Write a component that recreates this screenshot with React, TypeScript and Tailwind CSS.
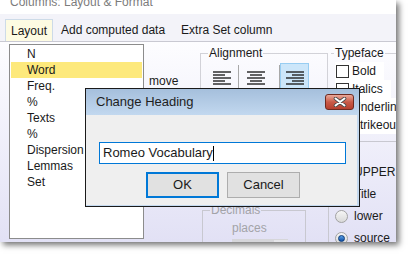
import React from "react";

const items = ["N", "Word", "Freq.", "%", "Texts", "%", "Dispersion", "Lemmas", "Set"];

function AlignIcon({ kind }: { kind: "left" | "center" | "right" }) {
  const shortX = kind === "left" ? 0 : kind === "center" ? 3 : 6;
  return (
    <svg width="18" height="14" viewBox="0 0 18 14">
      {[0, 1, 2, 3, 4].map((i) => {
        const long = i % 2 === 0;
        const x1 = long ? 0 : shortX;
        const x2 = long ? 18 : shortX + 12;
        const y = 1 + i * 3;
        return <line key={i} x1={x1} x2={x2} y1={y} y2={y} stroke="#222" strokeWidth="1.4" />;
      })}
    </svg>
  );
}

function Radio({ on }: { on?: boolean }) {
  return (
    <span className="w-[13px] h-[13px] rounded-full border border-[#a2a2a2] bg-linear-to-b from-[#f6f6f6] to-[#d9d9d9] flex items-center justify-center">
      {on && <span className="w-[7px] h-[7px] rounded-full bg-linear-to-b from-[#5aa0e6] to-[#0d4fa6] border border-[#0a3a7a]" />}
    </span>
  );
}

function Check({ label }: { label: string }) {
  return (
    <div className="h-[18px] flex items-center bg-white pl-[1px] pr-[8px] w-fit whitespace-nowrap">
      <span className="w-[13px] h-[13px] border border-[#333] bg-white" />
      <span className="ml-[3px]">{label}</span>
    </div>
  );
}

export default function App() {
  return (
    <div className="w-[411px] h-[257px] bg-white relative overflow-hidden font-['Liberation_Sans',Arial,sans-serif] text-[12px] text-[#1a1a1a]">
      <div className="w-[396px] h-[242px] flex flex-col bg-[#f3f3f9] shadow-[3px_3px_6px_rgba(0,0,0,0.55)] overflow-hidden">
        <div className="h-[14px] shrink-0 bg-white pl-[10px] text-[#7c7c7c]">
          <div className="leading-[12px] -mt-[4px]">Columns: Layout &amp; Format</div>
        </div>

        <div className="h-[27px] shrink-0 flex items-end pl-[5px]">
          <div className="h-[22px] w-[48px] flex items-center justify-center bg-[#fdfbe2] border border-b-0 border-[#cddbe8]">
            Layout
          </div>
          <div className="h-[22px] px-[8px] flex items-center">Add computed data</div>
          <div className="h-[22px] px-[8px] flex items-center">Extra Set column</div>
        </div>

        <div className="flex-1 flex items-start border-t border-[#c9c9d2] bg-linear-to-b from-[#fdfdff] to-[#e2e1f5] overflow-hidden">
          <div className="ml-[9px] mt-[2px] w-[135px] h-[195px] shrink-0 border border-[#8c8c8c] bg-white pt-[1px] px-[1px]">
            {items.map((t, i) => (
              <div key={i} className={`h-[16px] leading-[16px] pl-[16px] ${i === 1 ? "bg-[#fde97c]" : ""}`}>
                {t}
              </div>
            ))}
          </div>

          <div className="ml-[5px] mt-[31px] w-[51px] shrink-0 leading-[16px]">move</div>

          <div className="w-[128px] shrink-0 flex flex-col">
            <fieldset className="mt-[3px] h-[125px] border border-[#d2d2d8]">
              <legend className="ml-[7px] px-[1px] leading-[16px]">Alignment</legend>
              <div className="flex items-start mt-[2px] pl-[6px]">
                <div className="w-[30px] h-[30px] flex items-center justify-center">
                  <AlignIcon kind="left" />
                </div>
                <div className="ml-[1px] mt-[2px] w-[1px] h-[28px] bg-[#a8a8a8]" />
                <div className="w-[40px] h-[30px] flex items-center pl-[8px]">
                  <AlignIcon kind="center" />
                </div>
                <div className="mt-[2px] w-[1px] h-[28px] bg-[#a8a8a8]" />
                <div className="w-[29px] h-[30px] flex items-center justify-center bg-[#cce6fa] border border-[#98cdf2]">
                  <AlignIcon kind="right" />
                </div>
              </div>
            </fieldset>
            <fieldset className="mt-[32px] ml-[2px] w-[104px] h-[60px] border border-[#c8c8d0] text-[#a3a3a8]">
              <legend className="ml-[7px] px-[1px] leading-[16px]">Decimals</legend>
              <div className="pl-[29px] leading-[16px] mt-[2px]">places</div>
              <div className="ml-[29px] mt-[3px] w-[56px] h-[14px] bg-[#d6d6da] flex justify-end">
                <div className="w-[14px] h-[12px] mt-[1px] bg-[#e6e6ea]" />
              </div>
            </fieldset>
          </div>

          <div className="flex-1 flex flex-col">
            <fieldset className="mt-[3px] ml-[3px] h-[96px] border-t border-[#d2d2d8]">
              <legend className="ml-[3px] px-[1px] leading-[16px]">Typeface</legend>
              <div className="flex flex-col pl-[4px] pt-[1px]">
                <Check label="Bold" />
                <Check label="Italics" />
                <Check label="Underline" />
                <Check label="Strikeout" />
              </div>
            </fieldset>
            <div className="h-[120px] border-t border-l border-[#c8c8d0] flex flex-col pl-[6px] pt-[19px] whitespace-nowrap">
              {[
                ["UPPER", false],
                ["Title", false],
                ["lower", false],
                ["source", true],
              ].map(([t, on]) => (
                <div key={t as string} className="h-[22px] flex items-center">
                  <Radio on={on as boolean} />
                  <span className="ml-[6px]">{t as string}</span>
                </div>
              ))}
            </div>
          </div>
        </div>
      </div>

      <div className="absolute left-[85px] top-[88px] w-[275px] h-[119px] border border-[#1a1a1a] bg-[#c4d9ef] flex flex-col">
        <div className="h-[26px] shrink-0 bg-linear-to-b from-[#a5bfdc] to-[#c2d8ef] flex items-center pl-[10px] pr-[5px] text-[13px] text-[#1e1e1e]">
          <span className="flex-1">Change Heading</span>
          <div className="w-[29px] h-[16px] -mt-[1px] rounded-[3px] border border-[#6e2a20] bg-linear-to-b from-[#e9a99b] via-[#c95a47] to-[#b63f2e] flex items-center justify-center">
            <svg width="14" height="10" viewBox="0 0 14 10">
              <path d="M2.5 1.5 L11.5 8.5 M11.5 1.5 L2.5 8.5" stroke="#4a4a4a" strokeWidth="3.6" strokeLinecap="round" />
              <path d="M2.5 1.5 L11.5 8.5 M11.5 1.5 L2.5 8.5" stroke="#fff" strokeWidth="2" strokeLinecap="round" />
            </svg>
          </div>
        </div>
        <div className="flex-1 bg-[#efefef] mr-[2px] mb-[1px] pl-[13px] pt-[27px]">
          <div className="w-[247px] h-[22px] border border-[#0078d7] bg-white flex items-center pl-[3px] text-[13px]">
            <span>Romeo Vocabulary</span>
            <span className="w-[1px] h-[15px] bg-black" />
          </div>
          <div className="flex mt-[8px] ml-[47px]">
            <div className="w-[73px] h-[26px] border-2 border-[#0078d7] bg-[#e1e1e1] flex items-center justify-center text-[13px]">
              OK
            </div>
            <div className="ml-[8px] w-[73px] h-[26px] border border-[#adadad] bg-[#e1e1e1] flex items-center justify-center text-[13px]">
              Cancel
            </div>
          </div>
        </div>
      </div>
    </div>
  );
}
